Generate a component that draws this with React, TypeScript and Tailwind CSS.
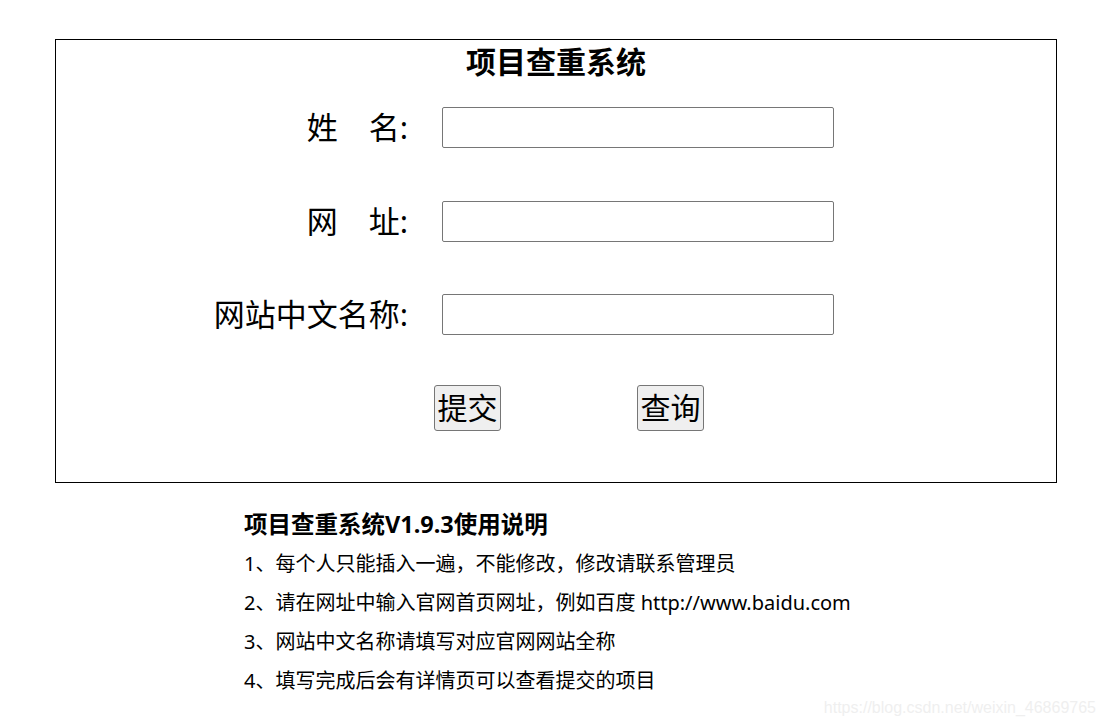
const FONT = "font-['Noto_Sans','Noto_Sans_CJK_SC',sans-serif]";

function Field({ label }: { label: string }) {
  return (
    <div className="flex h-[41px] items-center">
      <label className="w-[352px] text-right text-[31px] leading-[41px] text-black">{label}</label>
      <input
        type="text"
        className="ml-[34px] h-[41px] w-[392px] rounded-[2px] border border-[#767676] bg-white px-2 text-[20px] outline-none"
      />
    </div>
  );
}

function Btn({ children }: { children: string }) {
  return (
    <button className="flex h-[46px] w-[67px] items-center justify-center rounded-[3px] border border-[#767676] bg-[#efefef] text-[30px] leading-none text-black">
      {children}
    </button>
  );
}

export default function App() {
  return (
    <div className={`relative h-[728px] w-full overflow-hidden bg-white pt-[39px] ${FONT}`}>
      {/* main form box */}
      <div className="ml-[55px] flex h-[444px] w-[1002px] flex-col border border-black">
        <h2 className="h-[44px] text-center text-[30px] font-bold leading-[44px] text-black">项目查重系统</h2>

        <div className="mt-[23px] flex flex-col">
          <Field label={'姓\u3000名:'} />
          <div className="mt-[53px]">
            <Field label={'网\u3000址:'} />
          </div>
          <div className="mt-[52px]">
            <Field label="网站中文名称:" />
          </div>
        </div>

        <div className="mt-[50px] flex gap-[136px] pl-[378px]">
          <Btn>提交</Btn>
          <Btn>查询</Btn>
        </div>
      </div>

      {/* usage notes */}
      <div className="ml-[244px] mt-[22px] text-[20px] leading-[39px] text-black">
        <div className="text-[23.5px] font-bold">项目查重系统V1.9.3使用说明</div>
        <div>1、每个人只能插入一遍，不能修改，修改请联系管理员</div>
        <div>2、请在网址中输入官网首页网址，例如百度 http://www.baidu.com</div>
        <div>3、网站中文名称请填写对应官网网站全称</div>
        <div>4、填写完成后会有详情页可以查看提交的项目</div>
      </div>

      {/* watermark */}
      <div className="absolute right-[10px] top-[697px] font-['Liberation_Sans',sans-serif] text-[16px] leading-[22px] text-[#efefef]">
        https://blog.csdn.net/weixin_46869765
      </div>
    </div>
  );
}
